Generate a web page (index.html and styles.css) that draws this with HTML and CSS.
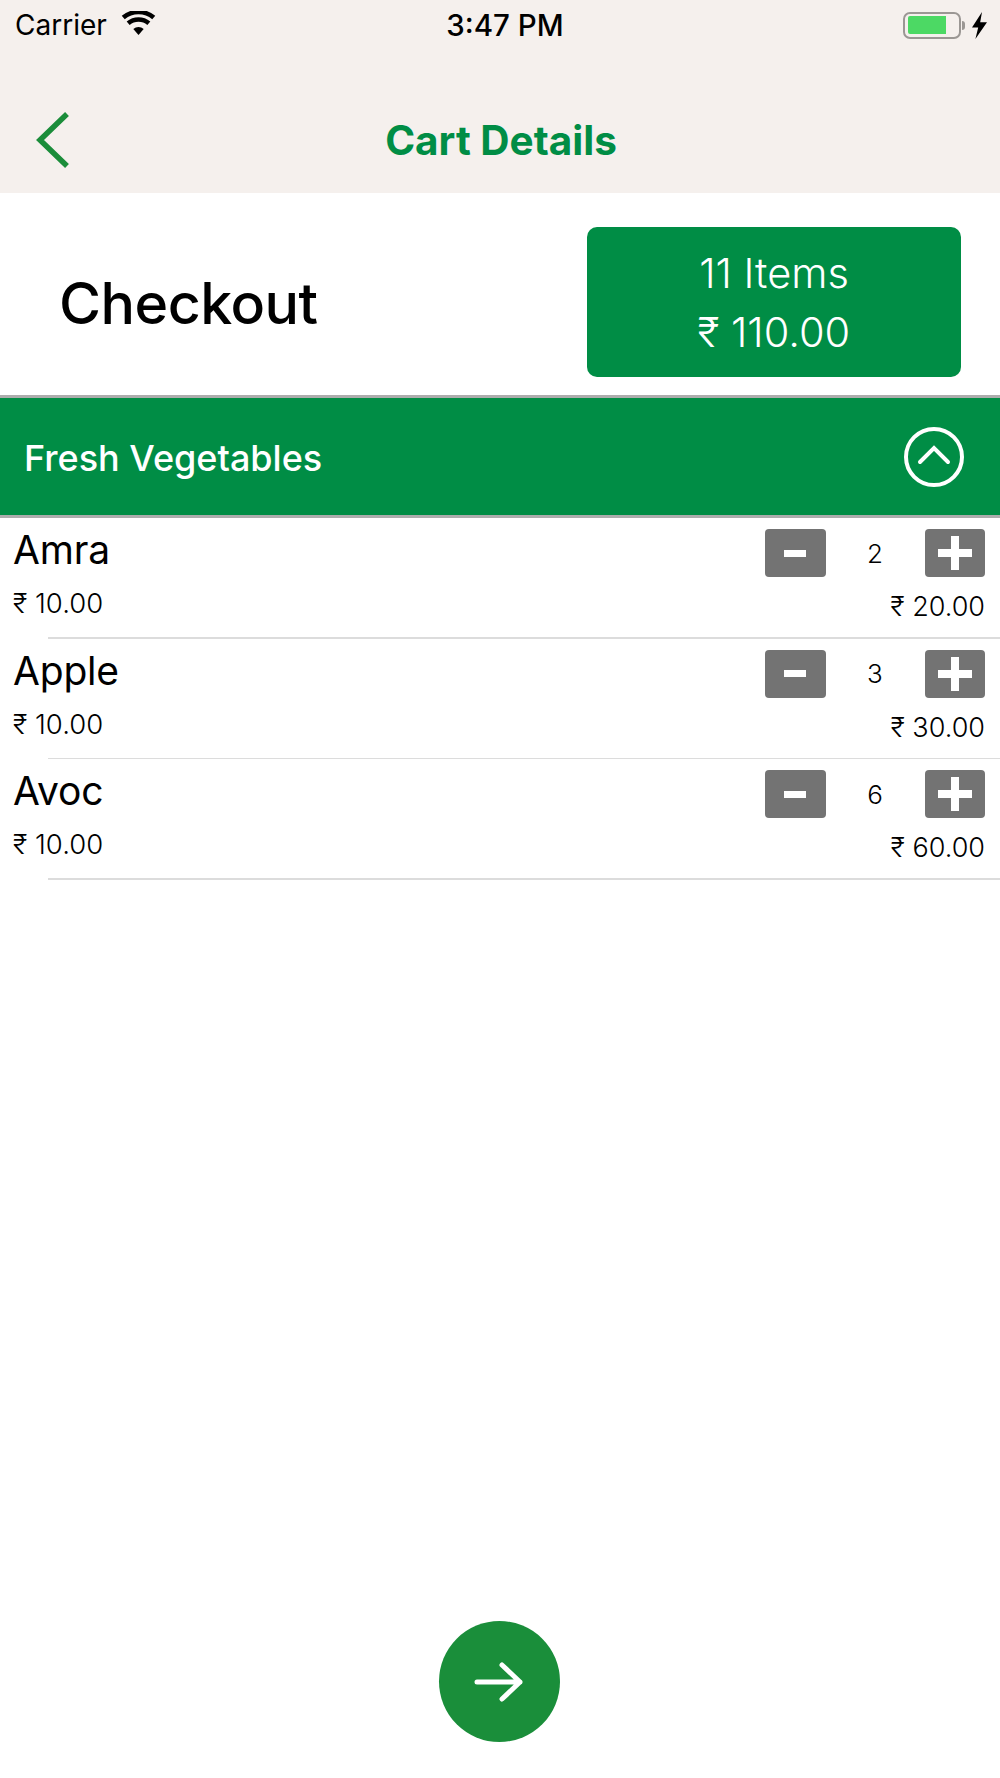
FILE: index.html
```html
<!DOCTYPE html>
<html lang="en">
<head>
<meta charset="utf-8">
<title>Cart Details</title>
<link rel="stylesheet" href="styles.css">
</head>
<body>
<div class="app">
  <header class="top">
    <div class="status">
      <div class="status-left">
        <span>Carrier</span>
        <svg class="wifi" viewBox="0 0 36 26"><path d="M18 25 L12.6 18.6 A8.6 8.6 0 0 1 23.4 18.6 Z"/><path d="M8.8 14.6 L5.7 11 A19 19 0 0 1 30.3 11 L27.2 14.6 A14.4 14.4 0 0 0 8.8 14.6 Z"/><path d="M3.7 8.6 L.6 5 A27 27 0 0 1 35.4 5 L32.3 8.6 A22.4 22.4 0 0 0 3.7 8.6 Z"/></svg>
      </div>
      <div class="time">3:47 PM</div>
      <div class="status-right">
        <div class="battery"><div class="battery-fill"></div></div>
        <div class="battery-cap"></div>
        <svg class="bolt" viewBox="0 0 15 27"><path d="M10 0 L0 15.5 H6.2 L3.4 27 L15 10.2 H8.2 Z"/></svg>
      </div>
    </div>
    <div class="nav">
      <svg class="back" viewBox="0 0 36 56"><path d="M33 2 L6 28 L33 54"/></svg>
      <h1 class="title">Cart Details</h1>
    </div>
  </header>

  <section class="checkout">
    <div class="checkout-label">Checkout</div>
    <div class="summary">
      <div class="summary-items">11 Items</div>
      <div class="summary-total">₹ 110.00</div>
    </div>
  </section>

  <section class="group">
    <div class="group-name">Fresh Vegetables</div>
    <svg class="toggle" viewBox="0 0 60 60"><circle cx="30" cy="30" r="28"/><path d="M16 35 L30 21 L44 35"/></svg>
  </section>

  <main class="list">
    <div class="row">
      <div class="info"><div class="name">Amra</div><div class="price">₹ 10.00</div></div>
      <div class="controls">
        <div class="stepper">
          <div class="btn"><span class="minus"></span></div>
          <div class="qty">2</div>
          <div class="btn"><span class="plus"></span></div>
        </div>
        <div class="line-total">₹ 20.00</div>
      </div>
    </div>
    <div class="row">
      <div class="info"><div class="name">Apple</div><div class="price">₹ 10.00</div></div>
      <div class="controls">
        <div class="stepper">
          <div class="btn"><span class="minus"></span></div>
          <div class="qty">3</div>
          <div class="btn"><span class="plus"></span></div>
        </div>
        <div class="line-total">₹ 30.00</div>
      </div>
    </div>
    <div class="row">
      <div class="info"><div class="name">Avoc</div><div class="price">₹ 10.00</div></div>
      <div class="controls">
        <div class="stepper">
          <div class="btn"><span class="minus"></span></div>
          <div class="qty">6</div>
          <div class="btn"><span class="plus"></span></div>
        </div>
        <div class="line-total">₹ 60.00</div>
      </div>
    </div>
  </main>

  <footer class="foot">
    <div class="fab">
      <svg class="arrow" viewBox="0 0 50 40"><path d="M3 20 H46 M28 3 L46 20 L28 37"/></svg>
    </div>
  </footer>
</div>
</body>
</html>
```
FILE: styles.css
```css
* { box-sizing: border-box; }
html, body { margin: 0; padding: 0; background: #fff; }
body { font-family: Inter, "Liberation Sans", sans-serif; color: #000; }
.app { width: 1000px; height: 1778px; display: flex; flex-direction: column; overflow: hidden; }

.top { height: 193px; background: #f5f0ed; flex: none; }
.status { height: 50px; padding: 0 13px 0 15px; display: grid; grid-template-columns: 1fr auto 1fr; align-items: center; font-size: 28px; }
.status-left { display: flex; align-items: center; gap: 14px; }
.wifi { width: 35px; height: 25px; fill: #000; margin-top: -4px; }
.time { font-size: 29.5px; font-weight: 500; margin-left: 8px; }
.status-right { display: flex; align-items: center; justify-content: flex-end; }
.battery { width: 58px; height: 27px; border: 2.5px solid #9b9794; border-radius: 7px; padding: 2.5px; margin-right: 1px; }
.battery-fill { width: 38px; height: 100%; background: #4cd964; border-radius: 2px 0 0 2px; }
.battery-cap { width: 3px; height: 9px; background: #9b9794; border-radius: 0 3px 3px 0; margin-right: 7px; }
.bolt { width: 15px; height: 27px; fill: #000; }

.nav { height: 143px; padding-top: 38px; position: relative; display: flex; align-items: center; justify-content: center; }
.back { position: absolute; left: 34px; top: 62px; width: 36px; height: 56px; fill: none; stroke: #1b8d3a; stroke-width: 5.5; }
.title { margin: 0 0 0 2px; font-size: 40.5px; font-weight: 700; color: #008d45; }

.checkout { height: 205px; flex: none; padding: 34px 39px 0 59px; display: flex; justify-content: space-between; align-items: flex-start; border-bottom: 3px solid #adadad; }
.checkout-label { font-size: 57.3px; font-weight: 500; line-height: 152px; letter-spacing: -.5px; }
.summary { width: 374px; height: 150px; background: #008d45; color: #fff; border-radius: 10px; display: flex; flex-direction: column; align-items: center; justify-content: center; gap: 13px; font-size: 41.5px; }
.summary-items, .summary-total { line-height: 46px; font-weight: 300; }

.group { height: 120px; flex: none; background: #008d45; border-bottom: 3px solid #adadad; padding: 0 36px 0 24px; display: flex; align-items: center; justify-content: space-between; }
.group-name { color: #fff; font-size: 36px; font-weight: 500; position: relative; top: 1px; }
.toggle { width: 60px; height: 60px; fill: none; stroke: #fff; stroke-width: 4; stroke-linecap: round; }

.list { flex: 1; }
.row { height: 120.67px; padding: 0 15px 0 13px; display: flex; justify-content: space-between; position: relative; }
.row::after { content: ""; position: absolute; left: 48px; right: 0; bottom: 0; height: 1.5px; background: #dcdcdc; }
.info { padding-top: 7px; }
.name { font-size: 39px; line-height: 50px; letter-spacing: -.2px; }
.price { font-size: 27.5px; line-height: 32px; margin-top: 12px; font-weight: 300; }
.controls { padding-top: 11px; display: flex; flex-direction: column; align-items: flex-end; }
.stepper { display: flex; align-items: center; width: 220px; justify-content: space-between; }
.btn { width: 60.5px; height: 48px; background: #737373; border-radius: 4px; display: flex; align-items: center; justify-content: center; position: relative; }
.minus { width: 22px; height: 7px; background: #fff; }
.plus { width: 34px; height: 8px; background: #fff; position: relative; display: block; }
.plus::after { content: ""; position: absolute; left: 13px; top: -13px; width: 8px; height: 34px; background: #fff; }
.qty { font-size: 26px; font-weight: 300; width: 30px; text-align: center; }
.line-total { font-size: 27px; line-height: 32px; font-weight: 300; margin-top: 14px; }

.foot { flex: none; height: 157px; display: flex; justify-content: center; }
.fab { width: 121px; height: 121px; margin-right: 1px; border-radius: 50%; background: #1a8e3a; display: flex; align-items: center; justify-content: center; }
.arrow { width: 50px; height: 40px; margin-left: -2px; fill: none; stroke: #fff; stroke-width: 5; stroke-linecap: round; stroke-linejoin: round; }
```
